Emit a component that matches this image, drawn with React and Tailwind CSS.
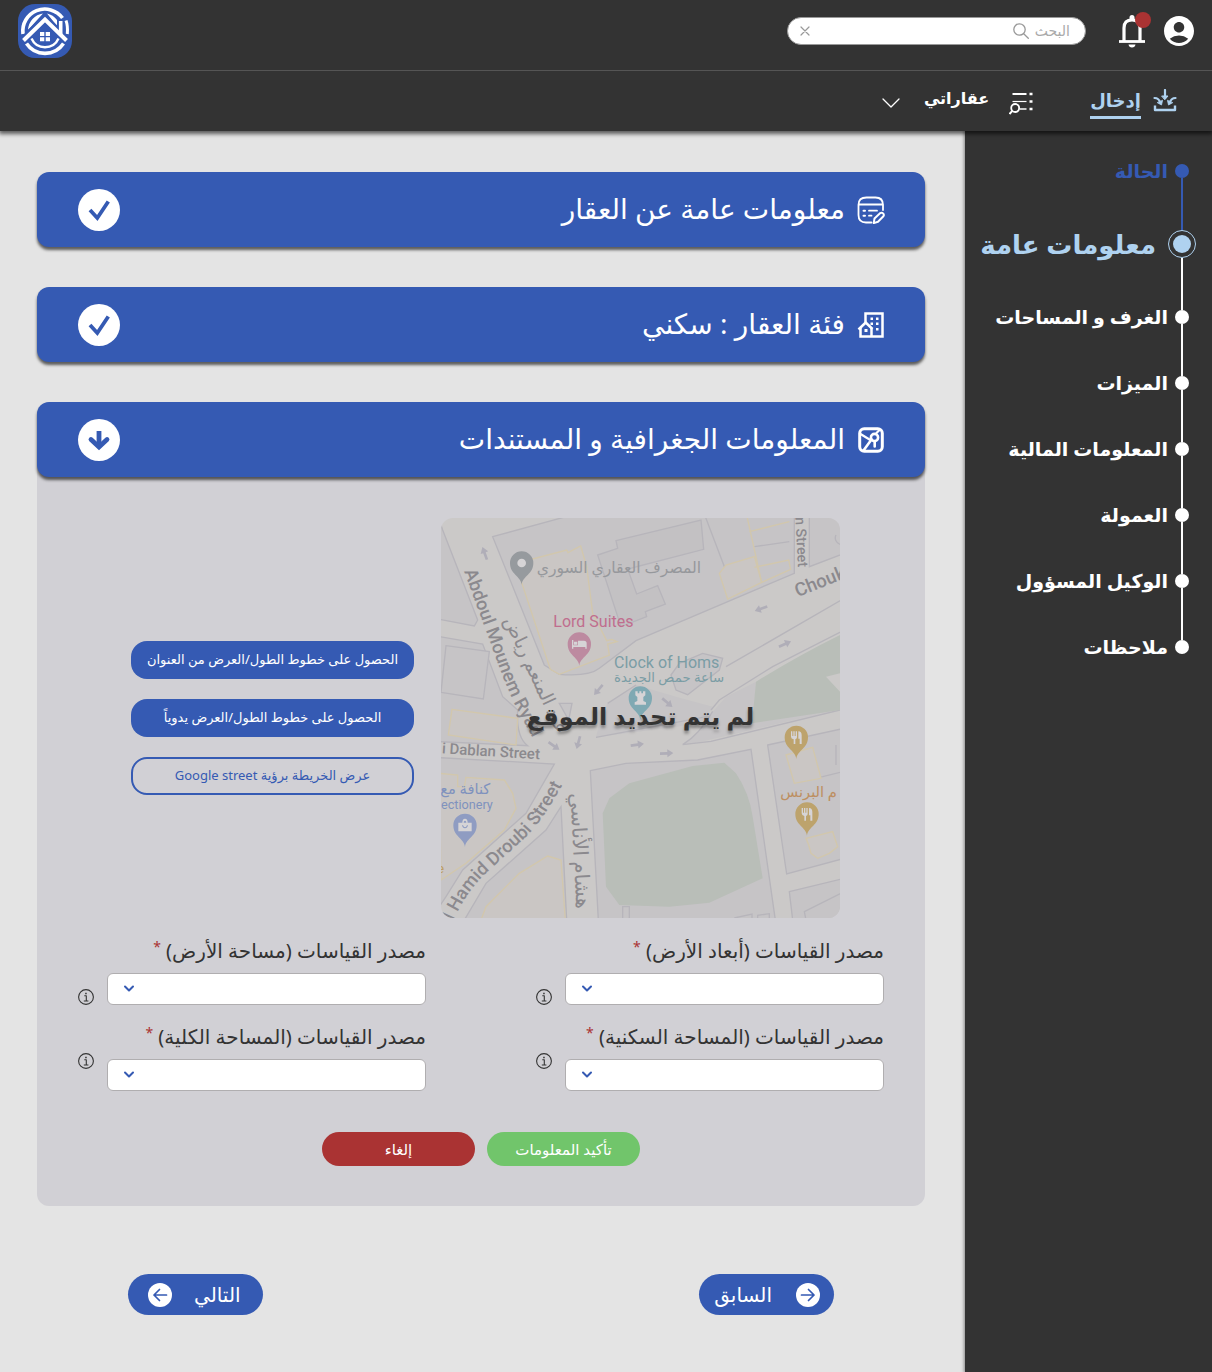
import React from "react";
import { MdAccountCircle } from "react-icons/md";

const stroke = { fill: "none", stroke: "currentColor", strokeLinecap: "round", strokeLinejoin: "round" };

function Logo() {
  return (
    <svg viewBox="0 0 54 54" className="size-[54px]" role="img" aria-label="شعار العقارات">
      <rect width="54" height="54" rx="17" fill="#355ab3" />
      <g fill="none" stroke="#fff">
        <path d="M5 30A22 22 0 0 1 44.500 14" strokeWidth="3.600" />
        <path d="M8.500 39.500A22.300 22.300 0 0 0 45.500 39.500" strokeWidth="3.600" />
        <path d="M13.500 34.500A14.800 14.800 0 0 0 40.500 34.500" strokeWidth="2.400" />
        <path d="M10 26A17.500 17.500 0 0 1 25 9.500zM29 9.500A17.500 17.500 0 0 1 39 16v6z" fill="#fff" stroke="none" />
        <path d="M10 27 21 16.500" stroke="#355ab3" strokeWidth="1.600" />
        <path d="M4.500 36.500 27 14.500 49.500 36.500" stroke="#355ab3" strokeWidth="7" />
        <path d="M42.700 17V31" strokeWidth="3.600" />
        <path d="M48 16.500Q50 22 49.300 30" strokeWidth="3" />
        <path d="M5.500 36.500 27 15.500 48.500 36.500" strokeWidth="4" />
      </g>
      <path d="M22 28h4.300v4H22zM27.700 28h4.300v4H27.700zM22 33.300h4.300v4H22zM27.700 33.300h4.300v4H27.700z" fill="#fff" />
    </svg>
  );
}

function BellIcon() {
  return (
    <svg viewBox="0 0 26 34" className="h-[34px] w-[26px]" {...stroke} strokeLinecap="butt" strokeLinejoin="miter">
      <path d="M0 27.500h26" strokeWidth="2.800" />
      <path d="M5 27V14Q5 6 13 6T21 14V27" strokeWidth="3.200" />
      <path d="M10.500 5.500V3.500a2.500 2.500 0 0 1 5 0v2zM9.500 30.500h7q-.5 3-3.500 3t-3.500-3z" fill="currentColor" stroke="none" />
    </svg>
  );
}

function InputIcon() {
  return (
    <svg viewBox="0 0 24 24" className="size-6" {...stroke} strokeWidth="2">
      <path d="M2 16.500v4.500H22v-4.500" strokeLinecap="butt" strokeWidth="2.400" />
      <path d="M12 1v8" strokeWidth="2.200" />
      <path d="M9 7h6L12 10.500z" fill="currentColor" strokeWidth="1" />
      <path d="M1.500 9q4.500 0 5.800 5M22.500 9q-4.500 0-5.800 5" strokeWidth="2.200" />
      <path d="M4.500 13.800l4 2.200 1-4.400zM19.500 13.800l-4 2.200-1-4.400z" fill="currentColor" strokeWidth=".8" />
    </svg>
  );
}

function ListSearchIcon() {
  return (
    <svg viewBox="0 0 24 24" className="size-6" {...stroke} strokeLinecap="butt" strokeWidth="2">
      <path d="M3.500 3h14" />
      <path d="M3.500 10.500h14" strokeWidth="1.200" />
      <path d="M11 18h6.500" strokeWidth="1.500" />
      <circle cx="6.200" cy="17" r="4" strokeWidth="1.800" />
      <path d="M3.300 19.800.5 23" strokeWidth="2" />
      <path d="M20.500 1.700h3v2.600h-3zM20.500 9.200h3v2.600h-3zM20.500 16.700h3v2.600h-3z" fill="currentColor" stroke="none" />
    </svg>
  );
}

function CardEditIcon() {
  return (
    <svg viewBox="0 0 28 28" className="size-7" {...stroke} strokeWidth="1.800">
      <path d="M26 14V9q0-7.500-7.500-7.500h-9Q1.500 1.500 1.500 9v10q0 7.500 7.500 7.500h5.500M1.500 8.500H26M12 14.700h8M12 19.700h2.500" />
      <path d="M6.500 14.700h1.500M6.500 19.700h1.500" strokeWidth="2" />
      <path d="M17.500 22.500l5.800-5.400q1.500-1 2.800.3t.3 2.800L21 25.700l-4.300 1.400z" strokeWidth="2" />
    </svg>
  );
}

function BuildingIcon() {
  return (
    <svg viewBox="0 0 28 28" className="size-7" {...stroke} strokeLinecap="butt" strokeLinejoin="miter" strokeWidth="2.500">
      <path d="M8.500 12V2.500h17v23h-22V17" />
      <path d="M1.500 18.500 8.700 11.500 15.500 18" />
      <path d="M14.500 17V25" />
      <path d="M13.500 6.500h2.500v2.500h-2.500zM19 6.500h2.500v2.500H19zM19 11.500h2.500v2.500H19zM19 17h2.500v2.500H19zM13.500 11.500h2.500v2.500h-2.500zM7.500 18h3v3h-3z" fill="currentColor" stroke="none" />
    </svg>
  );
}

function MapPinIcon() {
  return (
    <svg viewBox="0 0 28 28" className="size-7" {...stroke} strokeWidth="3">
      <rect x="2.700" y="2.700" width="22.600" height="22.600" rx="4.500" />
      <path d="M3.500 8l9 5.500M22.500 4l-3 3" strokeWidth="2.200" />
      <circle cx="17.500" cy="11.500" r="3.600" strokeWidth="2.600" />
      <path d="M14.500 13.500l-8 11M17.700 15.500v5" strokeWidth="2.600" />
    </svg>
  );
}

function InfoIcon() {
  return (
    <svg viewBox="0 0 16 16" className="size-4" {...stroke} strokeWidth="1.100" strokeLinecap="butt">
      <circle cx="8" cy="8" r="7.400" />
      <path d="M6.300 6.800h2v5M5.800 12h4.600" />
      <path d="M7.200 3.700h1.500v1.500H7.200z" fill="currentColor" stroke="none" />
    </svg>
  );
}

function StatusBadge({ done }) {
  return (
    <svg viewBox="0 0 42 42" className="size-[42px] shrink-0">
      <circle cx="21" cy="21" r="21" fill="#fff" />
      {done ? (
        <path d="M12 21l7.300 8L30.300 12.500" fill="none" stroke="#355ab3" strokeWidth="3.800" />
      ) : (
        <g fill="none" stroke="#355ab3" strokeWidth="4.800">
          <path d="M21 12v15" />
          <path d="M13 20.500l8 7.500 8-7.500" strokeLinecap="round" />
        </g>
      )}
    </svg>
  );
}

function SectionHeader({ icon, title, done, expanded }) {
  return (
    <button
      type="button"
      aria-expanded={expanded}
      className="relative flex h-[75px] w-full items-center gap-3 rounded-xl bg-[#355ab3] ps-10 pe-[41px] text-white shadow-[0_3px_3px_rgba(0,0,0,0.6)]"
    >
      {icon}
      <span className="grow pb-1 text-start text-[28px] leading-9">{title}</span>
      <StatusBadge done={done} />
    </button>
  );
}

function Pin({ x, y, color, children }) {
  return (
    <g transform={`translate(${x} ${y})`}>
      <path d="M0 65C-4 38-35 34-35 0a35 35 0 0 1 70 0C35 34 4 38 0 65z" transform="translate(0 36)" fill={color} />
      <g transform="translate(0 36)" fill="#d6d4d6">{children}</g>
    </g>
  );
}

function Arrow({ x, y, r }) {
  return <path d="M-20-4H2v-8L20 0 2 12V4h-22z" transform={`translate(${x} ${y}) rotate(${r})`} fill="#b0aeb8" />;
}

const fork = "M-16-18h4v14h3v-14h4v14h3v-14h4v18q0 5-5 6v14h-5V6q-8-2-8-8zM6-18q10 0 10 12v26h-6V4H6z";

function LocationMap() {
  return (
    <svg viewBox="15 24 1197 1200" className="size-full" role="img" aria-label="خريطة حمص" direction="ltr">
      <rect x="15" y="24" width="1197" height="1200" fill="#cbc9c8" />
      <g fill="#c6c4c6" stroke="#b7b5bb" strokeWidth="4">
        <path d="M10 30 20 60 125 330 115 348 10 328z" />
        <path d="M170 80 390 20H1075V190L600 392 490 475Q460 500 370 493L325 465z" />
        <path d="M1120 10V170L1225 130V10z" />
        <path d="M10 380 140 402 200 560 245 600Q240 680 275 707L10 695z" />
        <path d="M30 407 160 425 142 567 15 547z" />
        <path d="M480 682 495 620 515 580 600 525 720 560 830 590 790 665 740 704 765 702 1225 595V560L1170 600 950 640 960 515 870 560 800 640z" stroke="none" />
        <path d="M515 580 600 525M825 600 850 570 1010 470 1225 360M480 682l320-60M870 470 1225 265M740 704l85-10 400-97M740 704q50-30 90-100" fill="none" />
        <path d="M705 495 730 460 800 430 860 445 850 480 755 554 720 540z" />
        <path d="M370 580h38l-10 50z" />
        <path d="M10 743 355 762 270 910 80 1080 30 1160 10 1190z" />
        <path d="M375 890 392 1230H85L150 1120 330 960z" />
        <path d="M463 782 570 760 785 750 945 718 1018 1230H487z" />
        <path d="M995 705 1225 655V1045L1052 1092z" />
        <path d="M1060 1145 1225 1105V1230H1070z" />
        <path d="M1105 1205 1225 1145V1230H1110z" />
        <path d="M540 92 795 30 803 118 575 177 602 252 665 227 688 282 628 305 632 320 555 350 485 135 545 115z" fill="#c3c1c3" />
        <path d="M808 20 872 188 850 190M955 110 1060 95M1200 705v60M1200 75a20 20 0 0 0 12 28M560 1190h20v40h-20zM895 1224l53-12v18M965 1224v-8l35-5v19M1078 815l82-15 60-15" fill="none" />
      </g>
      <g fill="#cac6c4" stroke="#d2c7ac" strokeWidth="4">
        <path d="M257 218 240 160 392 120 396 128 434 108 452 170 470 310 512 392 527 388 543 395 515 402 520 435 370 493 343 478z" />
        <path d="M850 190 870 165 955 140 977 217 875 267z" />
        <path d="M932 15 977 217M940 65 1060 35M955 172 1058 150 1064 178 977 217" fill="none" />
        <path d="M48 598 245 625 240 705 37 675z" />
        <path d="M10 790 65 795 65 830 85 830 90 802 205 810 230 850 240 895 205 960 90 1060 15 1110z" />
        <path d="M135 1230 150 1190 250 1090 335 1038 375 1050 388 1230z" />
        <path d="M1050 735 1130 712 1155 805 1075 820z" />
        <path d="M1110 985 1190 965 1205 1010 1180 1030 1145 1045 1125 1030 1118 1005z" />
      </g>
      <g fill="#b9beb8">
        <path d="M960 515Q1090 435 1212 375V490L1170 500 1212 545V600L948 640z" />
        <path d="M580 820 770 768 865 758 900 790Q940 850 950 920L980 1105 820 1178 700 1190 550 1185 510 1130 500 910 520 865z" />
      </g>
      <Arrow x={146} y={130} r={-110} />
      <Arrow x={975} y={296} r={160} />
      <Arrow x={1047} y={402} r={-25} />
      <Arrow x={487} y={540} r={130} />
      <Arrow x={694} y={578} r={40} />
      <Arrow x={354} y={708} r={35} />
      <Arrow x={427} y={698} r={105} />
      <Arrow x={604} y={704} r={-8} />
      <Arrow x={692} y={730} r={-2} />
      <defs>
        <path id="abdoul" d="M84 184 160 390Q205 520 240 590L330 760" />
        <path id="hamid" d="M52 1232Q90 1145 155 1085L265 985Q335 920 415 755" />
      </defs>
      <g className="font-[Roboto,'DejaVu_Sans',sans-serif]" fill="#8b898e" fontSize="48" fontWeight="500">
        <text fontSize="55"><textPath href="#abdoul">Abdoul Mounem Ryad</textPath></text>
        <text fontSize="55"><textPath href="#hamid">l Hamid Droubi Street</textPath></text>
        <text x="17" y="730" fontSize="45" transform="rotate(3.500 17 730)">i Dablan Street</text>
        <text x="1078" y="22" fontSize="43" transform="rotate(87 1078 22)">n Street</text>
        <text x="1085" y="262" fontSize="56" transform="rotate(-22 1085 262)">Chouk</text>
        <text x="203" y="330" fontSize="56" fontWeight="400" transform="rotate(65 203 330)">عبد المنعم رياض</text>
        <text x="403" y="850" fontSize="61" fontWeight="400" transform="rotate(87 403 850)">هشام الأناسي</text>
        <g fontWeight="400">
          <text x="302" y="190" fontSize="47" fill="#96989c">المصرف العقاري السوري</text>
          <text x="352" y="350" fontSize="48" fill="#c06e8e">Lord Suites</text>
          <text x="534" y="473" fontSize="48" fill="#7b9da5">Clock of Homs</text>
          <text x="534" y="515" fontSize="40" fill="#7b9da5">ساعة حمص الجديدة</text>
          <text x="163" y="852" fontSize="44" textAnchor="end" fill="#7f92be">كنافة مع</text>
          <text x="15" y="898" fontSize="38" fill="#7f92be">ectionery</text>
          <text x="1033" y="860" fontSize="44" fill="#bd8f61">م البرنس</text>
          <text x="24" y="1090" fontSize="40" textAnchor="end" fill="#bd9d61">e</text>
        </g>
      </g>
      <Pin x={257} y={123} color="#969a9e"><circle r="13" /></Pin>
      <Pin x={430} y={366} color="#bd8aa0"><path d="M-22-12h4v16h14v-14h18q8 0 8 8v16h-4V9h-36v5h-4zM-16-7h10v9h-10z" /></Pin>
      <Pin x={613} y={528} color="#7fa9b3"><path d="M-15-20h7v6h5v-6h6v6h5v-6h7V-8l-6 5v12l8 4v7h-34v-7l8-4V-3l-6-5z" /></Pin>
      <Pin x={1081} y={646} color="#bda36c"><path d={fork} /></Pin>
      <Pin x={1113} y={876} color="#bda36c"><path d={fork} /></Pin>
      <Pin x={87} y={910} color="#8f9cc2"><path d="M-20-8h12q0-12 8-12t8 12h12v26h-40zM-4-8h8q0-6-4-6t-4 6zM-9 0q2 9 9 9t9-9h-3q-2 6-6 6t-6-6z" fillRule="evenodd" /></Pin>
    </svg>
  );
}

function Field({ id, label, infoClass }) {
  return (
    <div className="flex">
      <div className="grow">
        <label htmlFor={id} className="block h-9 text-xl leading-7 whitespace-nowrap text-[#333]">
          {label} <span className="align-top text-sm leading-5 text-[#aa3333]">*</span>
        </label>
        <div className="relative">
          <select id={id} className="block h-8 w-full appearance-none rounded-md border border-[#b0aeb0] bg-white px-3">
            <option></option>
          </select>
          <svg viewBox="0 0 12 8" className="pointer-events-none absolute end-4 top-3 h-2 w-3" {...stroke}>
            <path d="M2 1.500 6 5.500 10 1.500" stroke="#355ab3" strokeWidth="2" />
          </svg>
        </div>
      </div>
      <button type="button" aria-label="معلومات" className={`ms-[13px] text-[#333] ${infoClass}`}>
        <InfoIcon />
      </button>
    </div>
  );
}

const steps = [
  { label: "الحالة", state: "done" },
  { label: "معلومات عامة", state: "active" },
  { label: "الغرف و المساحات" },
  { label: "الميزات" },
  { label: "المعلومات المالية" },
  { label: "العمولة" },
  { label: "الوكيل المسؤول" },
  { label: "ملاحظات" },
];

function Step({ label, state, last }) {
  const active = state === "active";
  const done = state === "done";
  return (
    <li className={`flex items-center ${active ? "h-20" : "h-[66px]"}`} aria-current={active ? "step" : undefined}>
      <span className="flex w-7 shrink-0 flex-col items-center self-stretch">
        <span className={`w-0.5 flex-1 ${done ? "bg-transparent" : active ? "bg-[#355ab3]" : "bg-white"}`} />
        {active ? (
          <span className="flex size-7 items-center justify-center rounded-full border border-[#afd2f0]">
            <span className="size-[18px] rounded-full bg-[#afd2f0]" />
          </span>
        ) : (
          <span className={`size-3.5 rounded-full ${done ? "bg-[#355ab3]" : "bg-white"}`} />
        )}
        <span className={`w-0.5 flex-1 ${last ? "bg-transparent" : done ? "bg-[#355ab3]" : "bg-white"}`} />
      </span>
      <a
        href="#step"
        className={`font-bold whitespace-nowrap ${
          active ? "ms-3 text-[26px] text-[#afd2f0]" : done ? "text-[19px] text-[#355ab3]" : "text-[19px] text-white"
        }`}
      >
        {label}
      </a>
    </li>
  );
}

function PagerButton({ label, back }) {
  return (
    <button
      type="button"
      className={`flex h-[41px] w-[135px] items-center rounded-full bg-[#355ab3] text-xl text-white ${
        back ? "gap-6 ps-[14px]" : "flex-row-reverse justify-end gap-[22px] pe-5"
      }`}
    >
      <svg viewBox="0 0 24 24" className={`size-6 shrink-0 ${back ? "" : "rotate-180"}`}>
        <circle cx="12" cy="12" r="12" fill="#fff" />
        <path d="M5.500 12H18M12.500 6.500 18 12l-5.500 5.500" fill="none" stroke="#355ab3" strokeWidth="1.700" strokeLinecap="round" strokeLinejoin="round" />
      </svg>
      <span className={back ? "" : "grow text-end"}>{label}</span>
    </button>
  );
}

export default function App() {
  return (
    <div dir="rtl" className="flex min-h-screen flex-col bg-[#e4e4e4] font-['Noto_Sans','DejaVu_Sans',sans-serif]">
      <header className="relative z-20 bg-[#333] text-white shadow-[0_2px_4px_1px_rgba(0,0,0,0.6)]">
        <div className="flex h-[71px] items-start border-b border-[#555] ps-[15px] pe-[18px]">
          <button type="button" aria-label="الحساب" className="mt-[13px]">
            <MdAccountCircle className="size-9" />
          </button>
          <button type="button" aria-label="الإشعارات" className="relative ms-4 mt-3.5">
            <BellIcon />
            <span className="absolute -top-0.5 -right-1.5 size-4 rounded-full bg-[#aa3333]" />
          </button>
          <form className="ms-[33px] mt-[17px] flex h-7 w-[299px] items-center rounded-full border border-[#999] bg-white ps-[15px] pe-3 text-[#999]">
            <input aria-label="البحث" placeholder="البحث" className="field-sizing-content max-w-52 text-sm text-[#666] outline-none placeholder:text-[#aaa]" />
            <svg viewBox="0 0 16 16" className="ms-1.5 size-4 shrink-0" {...stroke} strokeWidth="1.300">
              <circle cx="6.500" cy="6.500" r="5.700" />
              <path d="M10.700 10.700 15.300 15.300" />
            </svg>
            <button type="reset" aria-label="مسح" className="ms-auto">
              <svg viewBox="0 0 10 10" className="size-2.5" {...stroke} strokeWidth="1.200">
                <path d="M1 1l8 8M9 1 1 9" />
              </svg>
            </button>
          </form>
          <a href="#home" className="ms-auto mt-1">
            <Logo />
          </a>
        </div>
        <nav className="flex h-[60px] items-start ps-[35px] pt-[15px] text-lg font-bold">
          <a href="#input" className="flex items-start text-[#afd2f0]">
            <span className="mt-[3px]"><InputIcon /></span>
            <span className="ms-3 h-[33px] border-b-[3px] border-[#afd2f0] leading-7">إدخال</span>
          </a>
          <button type="button" className="ms-[57px] flex items-start">
            <span className="mt-[5px]"><ListSearchIcon /></span>
            <span className="ms-5 text-base leading-6">عقاراتي</span>
            <svg viewBox="0 0 18 10" className="ms-6 mt-3 h-2.5 w-[18px]" {...stroke} strokeWidth="1.300">
              <path d="M1 1l8 8 8-8" />
            </svg>
          </button>
        </nav>
      </header>

      <div className="flex grow">
        <aside className="relative z-10 w-[247px] shrink-0 bg-[#333] ps-4 pt-[7px] shadow-[0_0_3px_1px_rgba(0,0,0,0.4)]">
          <ol>
            {steps.map((s, i) => (
              <Step key={s.label} {...s} last={i === steps.length - 1} />
            ))}
          </ol>
        </aside>

        <main className="min-w-0 grow ps-10 pe-[37px] pt-[41px]">
          <div className="flex flex-col gap-10">
            <SectionHeader icon={<CardEditIcon />} title="معلومات عامة عن العقار" done expanded={false} />
            <SectionHeader icon={<BuildingIcon />} title="فئة العقار : سكني" done expanded={false} />
            <section className="rounded-xl bg-[#d1d0d5] pb-10">
              <SectionHeader icon={<MapPinIcon />} title="المعلومات الجغرافية و المستندات" expanded />
              <div className="mt-[41px] flex items-center gap-[27px] ps-[85px] pe-[94px]">
                <div className="relative h-[400px] w-[399px] shrink-0 overflow-hidden rounded-xl">
                  <LocationMap />
                  <p className="absolute inset-0 flex items-center justify-center pb-1 text-2xl font-bold whitespace-nowrap text-[#333] [text-shadow:0_3px_3px_rgba(0,0,0,0.35)]">
                    لم يتم تحديد الموقع
                  </p>
                </div>
                <div className="flex min-w-0 grow flex-col gap-5 text-[13px] whitespace-nowrap text-white">
                  <button type="button" className="h-[38px] rounded-2xl bg-[#355ab3]">الحصول على خطوط الطول/العرض من العنوان</button>
                  <button type="button" className="h-[38px] rounded-2xl bg-[#355ab3]">الحصول على خطوط الطول/العرض يدوياً</button>
                  <button type="button" className="h-[38px] rounded-2xl border-2 border-[#355ab3] text-[#355ab3]">عرض الخريطة برؤية Google street</button>
                </div>
              </div>
              <div className="mt-[19px] grid grid-cols-2 gap-x-[110px] gap-y-[18px] px-[41px]">
                <Field id="land-dimensions" label="مصدر القياسات (أبعاد الأرض)" infoClass="self-end" />
                <Field id="land-area" label="مصدر القياسات (مساحة الأرض)" infoClass="self-end" />
                <Field id="living-area" label="مصدر القياسات (المساحة السكنية)" infoClass="mt-2 self-center" />
                <Field id="total-area" label="مصدر القياسات (المساحة الكلية)" infoClass="mt-2 self-center" />
              </div>
              <div className="mt-[41px] flex justify-center gap-3 text-[15px] text-white">
                <button type="button" className="h-[34px] w-[153px] rounded-full bg-[#71c56b]">تأكيد المعلومات</button>
                <button type="button" className="h-[34px] w-[153px] rounded-full bg-[#aa3333]">إلغاء</button>
              </div>
            </section>
          </div>
          <div className="mt-[68px] mb-14 flex justify-between px-[91px]">
            <PagerButton label="السابق" back />
            <PagerButton label="التالي" />
          </div>
        </main>
      </div>
    </div>
  );
}
